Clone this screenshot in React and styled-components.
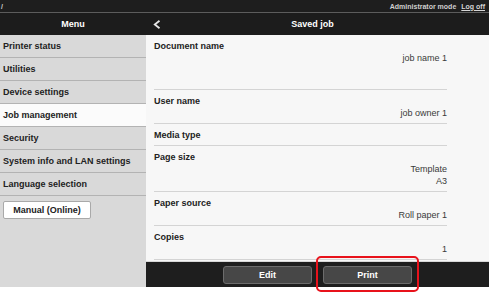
import React from 'react';
import styled, { createGlobalStyle } from 'styled-components';

const GlobalStyle = createGlobalStyle`
    html, body {
        margin: 0;
        min-height: 294px;
        background: #ffffff;
        font-family: "Liberation Sans", Arial, sans-serif;
    }
`;

const Page = styled.div`
    width: 489px;
    height: 287px;
    display: flex;
    flex-direction: column;
    overflow: visible;
`;

const TopBar = styled.div`
    height: 12px;
    background-color: #1e1e1e;
    border-bottom: 1px solid #5c5c5c;
    display: flex;
    align-items: center;
    justify-content: space-between;
    padding: 0 4px 0 1px;
    color: #cfcfcf;
    font-size: 7px;
    font-weight: bold;
`;

const AdminInfo = styled.div`
    display: flex;
    gap: 5px;
`;

const LogOff = styled.a`
    color: #d6d6d6;
    text-decoration: underline;
`;

const Header = styled.div`
    height: 22px;
    background-color: #1c1c1c;
    display: grid;
    grid-template-columns: 146px 1fr;
    color: #ffffff;
    font-size: 9px;
    font-weight: bold;
`;

const HeaderCell = styled.div`
    position: relative;
    display: flex;
    align-items: center;
    justify-content: center;
    padding-right: ${(p) => (p.$offset ? '10px' : '0')};
`;

const Back = styled.svg`
    position: absolute;
    left: 7px;
    top: 7px;
`;

const Body = styled.div`
    flex: 1;
    display: grid;
    grid-template-columns: 146px 1fr;
    min-height: 0;
`;

const Sidebar = styled.div`
    background-color: #d9d9d9;
    display: flex;
    flex-direction: column;
`;

const MenuItem = styled.div`
    height: 22px;
    border-bottom: 1px solid #b3b3b3;
    background-color: ${(p) => (p.$active ? '#fbfbfb' : 'transparent')};
    display: flex;
    align-items: center;
    padding-left: 3px;
    font-size: 9px;
    font-weight: bold;
    color: #222222;
`;

const ManualButton = styled.button`
    margin: 5px 0 0 3px;
    width: 88px;
    height: 18px;
    background-color: #ffffff;
    border: 1px solid #a9a9a9;
    border-radius: 2px;
    font-family: inherit;
    font-size: 9px;
    font-weight: bold;
    color: #222222;
    padding: 0;
`;

const Main = styled.div`
    display: flex;
    flex-direction: column;
    background-color: #f7f7f7;
    min-height: 0;
`;

const Details = styled.div`
    flex: 1;
    padding: 0 42px 0 8px;
    overflow: hidden;
`;

const Row = styled.div`
    box-sizing: border-box;
    min-height: ${(p) => p.$minHeight || 0}px;
    padding: 5px 0 4px;
    border-bottom: 1px solid #d4d4d4;
    font-size: 9px;
    line-height: 12px;
`;

const Label = styled.div`
    font-weight: bold;
    color: #222222;
`;

const Value = styled.div`
    text-align: right;
    color: #3a3a3a;
`;

const Footer = styled.div`
    height: 25px;
    background-color: #1e1e1e;
    border-top: 1px solid #d8d8d8;
    display: flex;
    align-items: center;
    justify-content: center;
    gap: 11px;
`;

const ButtonSlot = styled.div`
    position: relative;
    display: flex;
`;

const ActionButton = styled.button`
    width: 89px;
    height: 18px;
    background-color: #474747;
    border: 1px solid #6c6c6c;
    border-radius: 3px;
    color: #ffffff;
    font-family: inherit;
    font-size: 9px;
    font-weight: bold;
    padding: 0;
`;

const Highlight = styled.span`
    position: absolute;
    top: -10px;
    left: -7px;
    right: -7px;
    bottom: -8px;
    border: 2px solid #e8121b;
    border-radius: 5px;
    pointer-events: none;
`;

const menu = [
    'Printer status',
    'Utilities',
    'Device settings',
    'Job management',
    'Security',
    'System info and LAN settings',
    'Language selection',
];

const details = [
    { label: 'Document name', values: ['job name 1'], minHeight: 55 },
    { label: 'User name', values: ['job owner 1'] },
    { label: 'Media type', values: [] },
    { label: 'Page size', values: ['Template', 'A3'] },
    { label: 'Paper source', values: ['Roll paper 1'] },
    { label: 'Copies', values: ['1'] },
];

const App = () => {
    return (
        <>
            <GlobalStyle />
            <Page>
                <TopBar>
                    <span>/</span>
                    <AdminInfo>
                        <span>Administrator mode</span>
                        <LogOff>Log off</LogOff>
                    </AdminInfo>
                </TopBar>
                <Header>
                    <HeaderCell>Menu</HeaderCell>
                    <HeaderCell $offset>
                        <Back width="8" height="9" viewBox="0 0 8 9">
                            <polyline points="6.5,0.8 1.8,4.5 6.5,8.2" fill="none" stroke="#e6e6e6" strokeWidth="1.8" />
                        </Back>
                        Saved job
                    </HeaderCell>
                </Header>
                <Body>
                    <Sidebar>
                        {menu.map((item) => (
                            <MenuItem key={item} $active={item === 'Job management'}>{item}</MenuItem>
                        ))}
                        <ManualButton>Manual (Online)</ManualButton>
                    </Sidebar>
                    <Main>
                        <Details>
                            {details.map((row) => (
                                <Row key={row.label} $minHeight={row.minHeight}>
                                    <Label>{row.label}</Label>
                                    {row.values.map((v) => (
                                        <Value key={v}>{v}</Value>
                                    ))}
                                </Row>
                            ))}
                        </Details>
                        <Footer>
                            <ButtonSlot>
                                <ActionButton>Edit</ActionButton>
                            </ButtonSlot>
                            <ButtonSlot>
                                <ActionButton>Print</ActionButton>
                                <Highlight />
                            </ButtonSlot>
                        </Footer>
                    </Main>
                </Body>
            </Page>
        </>
    );
};

export default App;
